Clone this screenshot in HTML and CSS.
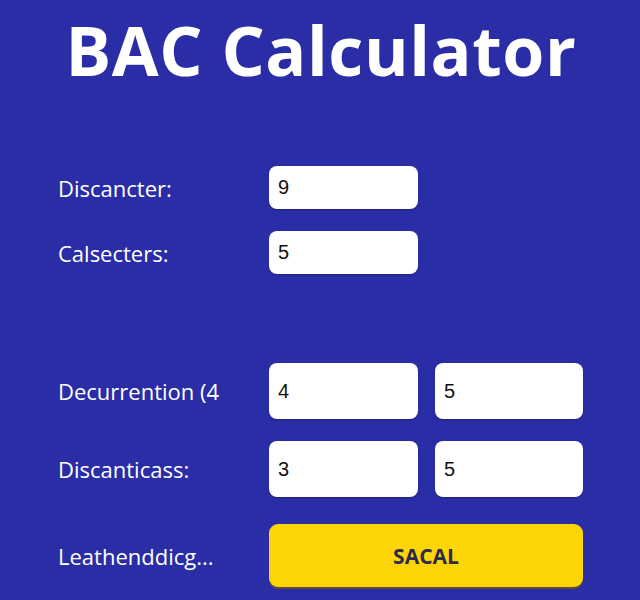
FILE: index.html
```html
<html>
<head>
    <link rel="stylesheet" href="styles.css">
</head>
<body>
    <div class="page">
        <h1 class="title">BAC Calculator</h1>
        <form class="calc" onsubmit="event.preventDefault();" autocomplete="off">
            <div class="row short first">
                <label class="lbl">Discancter:</label>
                <input class="field" type="text" value="9">
            </div>
            <div class="row short">
                <label class="lbl">Calsecters:</label>
                <input class="field" type="text" value="5">
            </div>
            <div class="row tall spaced">
                <label class="lbl">Decurrention (4</label>
                <input class="field" type="text" value="4">
                <input class="field" type="text" value="5">
            </div>
            <div class="row tall">
                <label class="lbl">Discanticass:</label>
                <input class="field" type="text" value="3">
                <input class="field" type="text" value="5">
            </div>
            <div class="row btn-row">
                <label class="lbl">Leathenddicg...</label>
                <button class="go" type="submit">SACAL</button>
            </div>
        </form>
    </div>
</body>
</html>
```

FILE: styles.css
```css
body {
    margin: 0;
    padding: 0;
    background-color: #2a2da6;
    font-family: "Open Sans", "Liberation Sans", sans-serif;
    min-height: 100vh;
}

.page {
    padding: 0 56px 0 58px;
}

.title {
    margin: 0;
    padding-top: 10px;
    text-align: center;
    color: #fff;
    font-size: 68px;
    font-weight: 700;
    letter-spacing: 0.6px;
    line-height: 80px;
}

.calc {
    display: flex;
    flex-direction: column;
    margin-top: 76px;
}

.row {
    display: grid;
    grid-template-columns: 194px 149px 148px;
    column-gap: 17px;
    align-items: center;
}

.row + .row {
    margin-top: 22px;
}

.row.spaced {
    margin-top: 89px;
}

.row.btn-row {
    margin-top: 27px;
}

.lbl {
    color: #fff;
    font-size: 22px;
    font-weight: 400;
    white-space: nowrap;
}

.field {
    box-sizing: border-box;
    width: 100%;
    border: none;
    border-radius: 8px;
    background: #fff;
    padding: 0 9px;
    font-family: "Liberation Sans", Arial, sans-serif;
    font-size: 20px;
    color: #111;
    box-shadow: 0 1px 2px rgba(0, 0, 0, 0.25);
}

.short .field {
    height: 43px;
}

.tall .field {
    height: 56px;
}

.go {
    grid-column: 2 / 4;
    height: 63px;
    border: none;
    border-radius: 9px;
    background: #fdd507;
    color: #2c2b4b;
    font-family: "Open Sans", sans-serif;
    font-size: 21px;
    font-weight: 700;
    box-shadow: 0 2px 0 #5b4d3a;
}
```
